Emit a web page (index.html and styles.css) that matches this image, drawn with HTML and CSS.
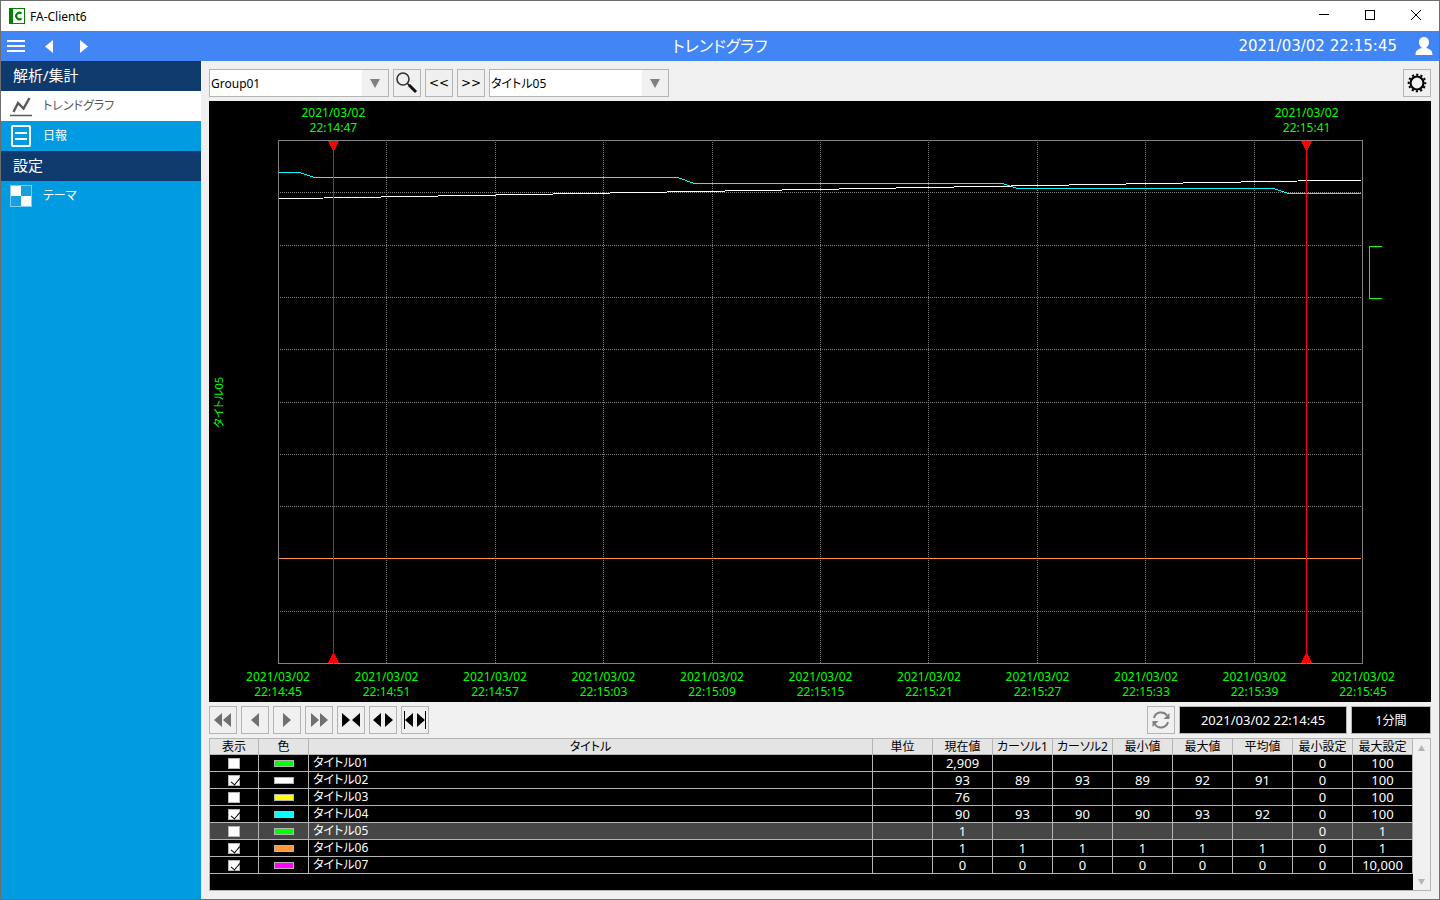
FILE: index.html
```html
<!DOCTYPE html>
<html lang="ja">

<head>
    <meta charset="UTF-8">
    <meta name="viewport" content="width=device-width, initial-scale=1.0">
    <title>FA-Client6</title>
    <link rel="stylesheet" href="styles.css">
</head>

<body>

    <!-- Window title bar -->
    <header class="titlebar">
        <svg class="app-icon" width="16" height="16" viewBox="0 0 16 16">
            <rect width="16" height="16" fill="#008000" />
            <rect x="4" y="1" width="11" height="14" fill="#fff" />
            <path d="M12.5 5.6A3.2 3.2 0 1 0 12.5 10.4" fill="none" stroke="#008000" stroke-width="2" />
        </svg>
        <span class="app-name">FA-Client6</span>
        <div class="window-buttons">
            <button type="button" aria-label="最小化"><svg width="10" height="10"><path d="M0 4.500H10" /></svg></button>
            <button type="button" aria-label="最大化"><svg width="10" height="10"><path d="M.5 .5H9.500V9.500H.5Z" /></svg></button>
            <button type="button" aria-label="閉じる"><svg class="smooth" width="10" height="10"><path d="M0 0L10 10M10 0L0 10" /></svg></button>
        </div>
    </header>

    <div class="appbar">
        <div class="appbar-nav">
            <button type="button" aria-label="メニュー"><svg width="18" height="12"><path d="M0 0H18V2H0ZM0 5H18V7H0ZM0 10H18V12H0Z" /></svg></button>
            <button type="button" aria-label="戻る"><svg width="8" height="13"><path d="M8 0V13L0 6.500Z" /></svg></button>
            <button type="button" aria-label="進む"><svg width="8" height="13"><path d="M0 0V13L8 6.500Z" /></svg></button>
        </div>
        <h1>トレンドグラフ</h1>
        <div class="appbar-user">
            <time>2021/03/02 22:15:45</time>
            <button type="button" aria-label="ユーザー">
                <svg width="18" height="18" viewBox="0 0 18 18">
                    <path d="M9 0C12 0 14 2.200 14 5.200C14 7.500 13 9.300 11.500 10.300V11.300C15 12 17.500 13.500 17.500 18H.5C.5 13.500 3 12 6.500 11.300V10.300C5 9.300 4 7.500 4 5.200C4 2.200 6 0 9 0Z" />
                </svg>
            </button>
        </div>
    </div>

    <div class="workspace">
        <nav class="sidebar">
            <h2>解析/集計</h2>
            <a href="#trend" class="active">
                <svg width="24" height="22" viewBox="0 0 24 22" fill="none" stroke="#58585c">
                    <path d="M4.500 17L9 8L14.500 13.500L20.500 3" stroke-width="2.400" />
                    <path d="M1 20.500H23" stroke-width="1.500" />
                </svg>
                トレンドグラフ
            </a>
            <a href="#daily">
                <svg width="24" height="22" viewBox="0 0 24 22" fill="none" stroke="#fff" stroke-width="2">
                    <rect x="3" y="1" width="18" height="20" rx="1" />
                    <path d="M6 8H18M6 14H18" />
                </svg>
                日報
            </a>
            <h2>設定</h2>
            <a href="#theme">
                <svg width="24" height="22" viewBox="0 0 24 22">
                    <rect x="1.500" y=".5" width="21" height="21" fill="#1a9fe0" stroke="#7fccee" />
                    <path d="M2 1H12V11H2ZM12 11H22V21H12Z" fill="#fff" />
                </svg>
                テーマ
            </a>
        </nav>

        <main>
            <div class="toolbar">
                <div class="combo">
                    <select aria-label="グループ">
                        <option>Group01</option>
                    </select>
                    <span class="combo-arrow"><svg width="10" height="9"><path d="M0 0H10L5 9Z" /></svg></span>
                </div>
                <button type="button" class="tool" aria-label="検索">
                    <svg width="24" height="24" viewBox="0 0 24 24" fill="none" stroke="#111">
                        <circle cx="8" cy="8" r="6" stroke="#333" stroke-width="1.600" />
                        <path d="M12.500 12.500L15 15" stroke-width="1.500" />
                        <path d="M14 14L21 21" stroke-width="3" />
                    </svg>
                </button>
                <button type="button" class="tool step">&lt;&lt;</button>
                <button type="button" class="tool step">&gt;&gt;</button>
                <div class="combo">
                    <select aria-label="タイトル">
                        <option>タイトル05</option>
                    </select>
                    <span class="combo-arrow"><svg width="10" height="9"><path d="M0 0H10L5 9Z" /></svg></span>
                </div>
                <button type="button" class="tool push-right" aria-label="グラフ設定">
                    <svg width="20" height="20" viewBox="0 0 20 20" fill="none" stroke="#000">
                        <circle cx="10" cy="10" r="6.500" stroke-width="2.200" />
                        <circle cx="10" cy="10" r="8.300" stroke-width="2" stroke-dasharray="2.200 2.146" stroke-dashoffset="1.100" />
                    </svg>
                </button>
            </div>

            <!-- Trend chart -->
            <section class="chart">
                <div class="cursor-labels">
                    <div class="cursor-label" style="left: 5.1%">2021/03/02<br>22:14:47</div>
                    <div class="cursor-label" style="left: 94.8%">2021/03/02<br>22:15:41</div>
                </div>
                <div class="y-title"><span>タイトル05</span></div>
                <svg class="plot" viewBox="0 0 1085 524" preserveAspectRatio="none">
                    <g class="grid">
                        <path d="M108.500 0V524M217.500 0V524M325.500 0V524M434.500 0V524M542.500 0V524M650.500 0V524M759.500 0V524M867.500 0V524M976.500 0V524" />
                        <path d="M0 52.500H1085M0 105.500H1085M0 157.500H1085M0 209.500H1085M0 262.500H1085M0 314.500H1085M0 366.500H1085M0 418.500H1085M0 471.500H1085" />
                    </g>
                    <rect class="frame" x=".5" y=".5" width="1084" height="523" />
                    <polyline class="series" stroke="#ff9640" points="1,418.5 1083,418.5" />
                    <polyline class="series" stroke="#00ffff" points="1,32.5 21,32.5 37,37.5 400,37.5 416,43.5 724,43.5 740,48.5 995,48.5 1011,53.5 1083,53.5" />
                    <polyline class="series" stroke="#ffffff" points="1,58.8 46,58 1020,41 1083,40.2" />
                    <g class="cursor">
                        <path d="M55.500 0V524M1028.500 0V524" />
                        <path d="M50 1H61L55.500 12ZM50 523H61L55.500 512Z" />
                        <path d="M1023 1H1034L1028.500 12ZM1023 523H1034L1028.500 512Z" />
                    </g>
                </svg>
                <div class="range-cell"><div class="range-marker"></div></div>
                <div class="x-labels">
                    <div>2021/03/02<br>22:14:45</div>
                    <div>2021/03/02<br>22:14:51</div>
                    <div>2021/03/02<br>22:14:57</div>
                    <div>2021/03/02<br>22:15:03</div>
                    <div>2021/03/02<br>22:15:09</div>
                    <div>2021/03/02<br>22:15:15</div>
                    <div>2021/03/02<br>22:15:21</div>
                    <div>2021/03/02<br>22:15:27</div>
                    <div>2021/03/02<br>22:15:33</div>
                    <div>2021/03/02<br>22:15:39</div>
                    <div>2021/03/02<br>22:15:45</div>
                </div>
            </section>

            <div class="toolbar">
                <button type="button" class="tool dim" aria-label="前ページ"><svg width="18" height="14"><path d="M8 0V14L0 7ZM17 0V14L9 7Z" /></svg></button>
                <button type="button" class="tool dim" aria-label="前へ"><svg width="8" height="14"><path d="M8 0V14L0 7Z" /></svg></button>
                <button type="button" class="tool dim" aria-label="次へ"><svg width="8" height="14"><path d="M0 0V14L8 7Z" /></svg></button>
                <button type="button" class="tool dim" aria-label="次ページ"><svg width="18" height="14"><path d="M1 0V14L9 7ZM10 0V14L18 7Z" /></svg></button>
                <button type="button" class="tool" aria-label="縮小"><svg width="18" height="14"><path d="M0 0V14L8 7ZM18 0V14L10 7Z" /></svg></button>
                <button type="button" class="tool" aria-label="拡大"><svg width="20" height="14"><path d="M8 0V14L0 7ZM12 0V14L20 7Z" /></svg></button>
                <button type="button" class="tool" aria-label="全体表示"><svg width="22" height="18"><path d="M0 0H1V18H0ZM21 0H22V18H21ZM9 2V16L1 9ZM13 2V16L21 9Z" /></svg></button>
                <button type="button" class="tool push-right" aria-label="更新">
                    <svg width="20" height="20" viewBox="0 0 20 20">
                        <path d="M3 8A7.300 7.300 0 0 1 16 5.500M17 12A7.300 7.300 0 0 1 4 14.500" fill="none" stroke="#808080" stroke-width="2" />
                        <path d="M18.500 3V9H12.500ZM1.500 17V11H7.500Z" fill="#808080" />
                    </svg>
                </button>
                <button type="button" class="readout start-time">2021/03/02 22:14:45</button>
                <button type="button" class="readout span-time">1分間</button>
            </div>

            <!-- Legend and values -->
            <div class="legend">
                <table>
                    <thead>
                        <tr>
                            <th class="col-show">表示</th>
                            <th class="col-color">色</th>
                            <th>タイトル</th>
                            <th class="col-value">単位</th>
                            <th class="col-value">現在値</th>
                            <th class="col-value">カーソル1</th>
                            <th class="col-value">カーソル2</th>
                            <th class="col-value">最小値</th>
                            <th class="col-value">最大値</th>
                            <th class="col-value">平均値</th>
                            <th class="col-value">最小設定</th>
                            <th class="col-value">最大設定</th>
                        </tr>
                    </thead>
                    <tbody>
                        <tr>
                            <td><input type="checkbox" aria-label="タイトル01を表示"></td>
                            <td><span class="swatch green"></span></td>
                            <td class="name">タイトル01</td>
                            <td></td><td>2,909</td><td></td><td></td><td></td><td></td><td></td><td>0</td><td>100</td>
                        </tr>
                        <tr>
                            <td><input type="checkbox" aria-label="タイトル02を表示" checked></td>
                            <td><span class="swatch white"></span></td>
                            <td class="name">タイトル02</td>
                            <td></td><td>93</td><td>89</td><td>93</td><td>89</td><td>92</td><td>91</td><td>0</td><td>100</td>
                        </tr>
                        <tr>
                            <td><input type="checkbox" aria-label="タイトル03を表示"></td>
                            <td><span class="swatch yellow"></span></td>
                            <td class="name">タイトル03</td>
                            <td></td><td>76</td><td></td><td></td><td></td><td></td><td></td><td>0</td><td>100</td>
                        </tr>
                        <tr>
                            <td><input type="checkbox" aria-label="タイトル04を表示" checked></td>
                            <td><span class="swatch cyan"></span></td>
                            <td class="name">タイトル04</td>
                            <td></td><td>90</td><td>93</td><td>90</td><td>90</td><td>93</td><td>92</td><td>0</td><td>100</td>
                        </tr>
                        <tr class="selected">
                            <td><input type="checkbox" aria-label="タイトル05を表示"></td>
                            <td><span class="swatch green"></span></td>
                            <td class="name">タイトル05</td>
                            <td></td><td>1</td><td></td><td></td><td></td><td></td><td></td><td>0</td><td>1</td>
                        </tr>
                        <tr>
                            <td><input type="checkbox" aria-label="タイトル06を表示" checked></td>
                            <td><span class="swatch orange"></span></td>
                            <td class="name">タイトル06</td>
                            <td></td><td>1</td><td>1</td><td>1</td><td>1</td><td>1</td><td>1</td><td>0</td><td>1</td>
                        </tr>
                        <tr>
                            <td><input type="checkbox" aria-label="タイトル07を表示" checked></td>
                            <td><span class="swatch magenta"></span></td>
                            <td class="name">タイトル07</td>
                            <td></td><td>0</td><td>0</td><td>0</td><td>0</td><td>0</td><td>0</td><td>0</td><td>10,000</td>
                        </tr>
                    </tbody>
                </table>
                <div class="scrollbar">
                    <button type="button" aria-label="上へ"><svg width="7" height="6"><path d="M0 6H7L3.500 0Z" /></svg></button>
                    <button type="button" aria-label="下へ"><svg width="7" height="6"><path d="M0 0H7L3.500 6Z" /></svg></button>
                </div>
            </div>
        </main>
    </div>

</body>

</html>
```
FILE: styles.css
```css
* {
    box-sizing: border-box;
}

body {
    display: flex;
    flex-direction: column;
    height: 100vh;
    margin: 0;
    border: 1px solid #6e6e6e;
    background-color: #f0f0f0;
    font-family: "Noto Sans", "Noto Sans CJK JP", sans-serif;
    font-size: 12px;
    /* proportional kana */
    font-feature-settings: "palt";
    overflow: hidden;
}

h1,
h2 {
    margin: 0;
    font-weight: normal;
}

button,
select {
    margin: 0;
    padding: 0;
    border: none;
    background: none;
    font: inherit;
    font-feature-settings: inherit;
    color: inherit;
}

svg {
    display: block;
    flex: none;
}

/* Window title bar */
.titlebar {
    display: flex;
    flex: none;
    align-items: center;
    height: 30px;
    padding-left: 8px;
    background-color: #fff;
    color: #000;
}

.app-name {
    margin-left: 5px;
}

.window-buttons {
    display: flex;
    height: 100%;
    margin-left: auto;
}

.window-buttons button {
    display: flex;
    align-items: center;
    justify-content: center;
    width: 46px;
    padding-bottom: 2px;
}

.window-buttons svg {
    fill: none;
    stroke: #000;
    shape-rendering: crispEdges;
}

.window-buttons .smooth {
    shape-rendering: auto;
}

/* Blue application bar */
.appbar {
    display: grid;
    grid-template-columns: 1fr auto 1fr;
    flex: none;
    align-items: center;
    height: 30px;
    padding: 0 6px;
    background-color: #4285f4;
    color: #fff;
}

.appbar svg {
    fill: #fff;
}

.appbar h1 {
    font-size: 16px;
    line-height: 30px;
}

.appbar-nav {
    display: flex;
    align-items: center;
    gap: 20px;
}

.appbar-nav button {
    min-width: 15px;
}

.appbar-user {
    display: flex;
    align-items: center;
    justify-content: flex-end;
    gap: 18px;
    font-family: "DejaVu Sans", sans-serif;
    font-size: 15px;
}

.workspace {
    display: flex;
    flex: 1;
    min-height: 0;
}

/* Side menu */
.sidebar {
    flex: none;
    width: 200px;
    background-color: #009be0;
    color: #fff;
}

.sidebar h2 {
    height: 30px;
    padding-left: 12px;
    background-color: #0f3a6e;
    font-size: 15px;
    line-height: 28px;
}

.sidebar a {
    display: flex;
    align-items: center;
    gap: 10px;
    height: 30px;
    padding-left: 8px;
    line-height: 30px;
    color: inherit;
    text-decoration: none;
}

.sidebar .active {
    background-color: #fff;
    color: #58585c;
}

main {
    display: flex;
    flex: 1;
    flex-direction: column;
    gap: 4px;
    min-width: 0;
    padding: 8px;
}

/* Button rows */
.toolbar {
    display: flex;
    flex: none;
    gap: 4px;
    height: 28px;
}

.tool {
    display: flex;
    align-items: center;
    justify-content: center;
    width: 28px;
    border: 1px solid #b4b4b4;
    background-color: #f0f0f0;
}

.dim svg {
    fill: #707070;
}

.step {
    font-family: "DejaVu Sans", sans-serif;
}

.push-right {
    margin-left: auto;
}

.combo {
    display: grid;
    width: 180px;
    border: 1px solid #b4b4b4;
    background-color: #fff;
}

.combo select,
.combo-arrow {
    grid-area: 1 / 1;
}

.combo select {
    appearance: none;
    padding: 0 28px 0 1px;
    color: #000;
}

.combo-arrow {
    display: flex;
    align-items: center;
    justify-content: center;
    justify-self: end;
    width: 26px;
    background-color: #f0f0f0;
    fill: #808080;
    pointer-events: none;
}

.readout {
    border: 1px solid #b4b4b4;
    background-color: #000;
    color: #fff;
}

.start-time {
    width: 168px;
    font-size: 13px;
}

.span-time {
    width: 80px;
}

/* Trend chart */
.chart {
    display: grid;
    flex: 1;
    grid-template-columns: 69px 1fr 68px;
    grid-template-rows: 39px 1fr 38px;
    min-height: 0;
    background-color: #000;
    color: #00ff00;
    line-height: 15px;
    text-align: center;
}

.cursor-labels {
    position: relative;
    grid-area: 1 / 2;
}

.cursor-label {
    position: absolute;
    top: 4px;
    transform: translateX(-50%);
}

.y-title {
    display: flex;
    grid-area: 2 / 1;
    align-items: center;
    padding-left: 2px;
    font-size: 11px;
}

.y-title span {
    writing-mode: vertical-rl;
    text-orientation: sideways;
    transform: rotate(180deg);
}

.plot {
    grid-area: 2 / 2;
    width: 100%;
    height: 100%;
    min-height: 0;
    shape-rendering: crispEdges;
}

.plot * {
    vector-effect: non-scaling-stroke;
}

.grid {
    fill: none;
    stroke: #808080;
    stroke-dasharray: 1 1;
}

.frame {
    fill: none;
    stroke: #808080;
}

.series {
    fill: none;
}

.cursor {
    fill: #ff0000;
    stroke: #ff0000;
}

.cursor path + path {
    stroke: none;
}

.range-cell {
    grid-area: 2 / 3;
    padding: 106px 0 0 6px;
}

.range-marker {
    width: 13px;
    height: 53px;
    border: 1px solid #00ff00;
    border-right: none;
}

.x-labels {
    display: flex;
    grid-area: 3 / 2;
    justify-content: space-between;
    margin: 0 -40px;
    padding-top: 5px;
}

.x-labels div {
    width: 80px;
}

/* Legend table */
.legend {
    display: flex;
    flex: none;
    align-items: flex-start;
    min-height: 153px;
    border: 1px solid #b4b4b4;
    background-color: #000;
    color: #fff;
}

table {
    flex: 1;
    border-spacing: 0;
    table-layout: fixed;
}

th,
td {
    height: 17px;
    padding: 0;
    border-right: 1px solid #b4b4b4;
    border-bottom: 1px solid #b4b4b4;
    font-size: 13px;
    line-height: 16px;
    text-align: center;
}

th {
    height: 16px;
    background-color: #e4e4e4;
    font-size: 12px;
    font-weight: normal;
    line-height: 15px;
    color: #000;
}

.col-show {
    width: 49px;
}

.col-color {
    width: 50px;
}

.col-value {
    width: 60px;
}

.name {
    padding-left: 4px;
    font-size: 12px;
    text-align: left;
}

.selected {
    background-color: #464646;
}

input[type="checkbox"] {
    appearance: none;
    display: block;
    width: 12px;
    height: 11px;
    margin: 0 auto;
    border: 1px solid #b4b4b4;
    background-color: #fff;
}

input[type="checkbox"]:checked::before {
    content: "";
    display: block;
    width: 4px;
    height: 8px;
    margin: 0 0 0 4px;
    border: solid #000;
    border-width: 0 1px 1px 0;
    transform: rotate(40deg);
}

.swatch {
    display: block;
    width: 20px;
    height: 7px;
    margin: 0 auto;
    border: 1px solid #b4b4b4;
}

.green {
    background-color: #00ff00;
}

.white {
    background-color: #ffffff;
}

.yellow {
    background-color: #ffff00;
}

.cyan {
    background-color: #00ffff;
}

.orange {
    background-color: #ff9640;
}

.magenta {
    background-color: #ff00ff;
}

.scrollbar {
    display: flex;
    flex-direction: column;
    align-self: stretch;
    justify-content: space-between;
    width: 17px;
    background-color: #f0f0f0;
}

.scrollbar button {
    display: flex;
    align-items: center;
    justify-content: center;
    height: 17px;
    fill: #b4b4b4;
}
```
